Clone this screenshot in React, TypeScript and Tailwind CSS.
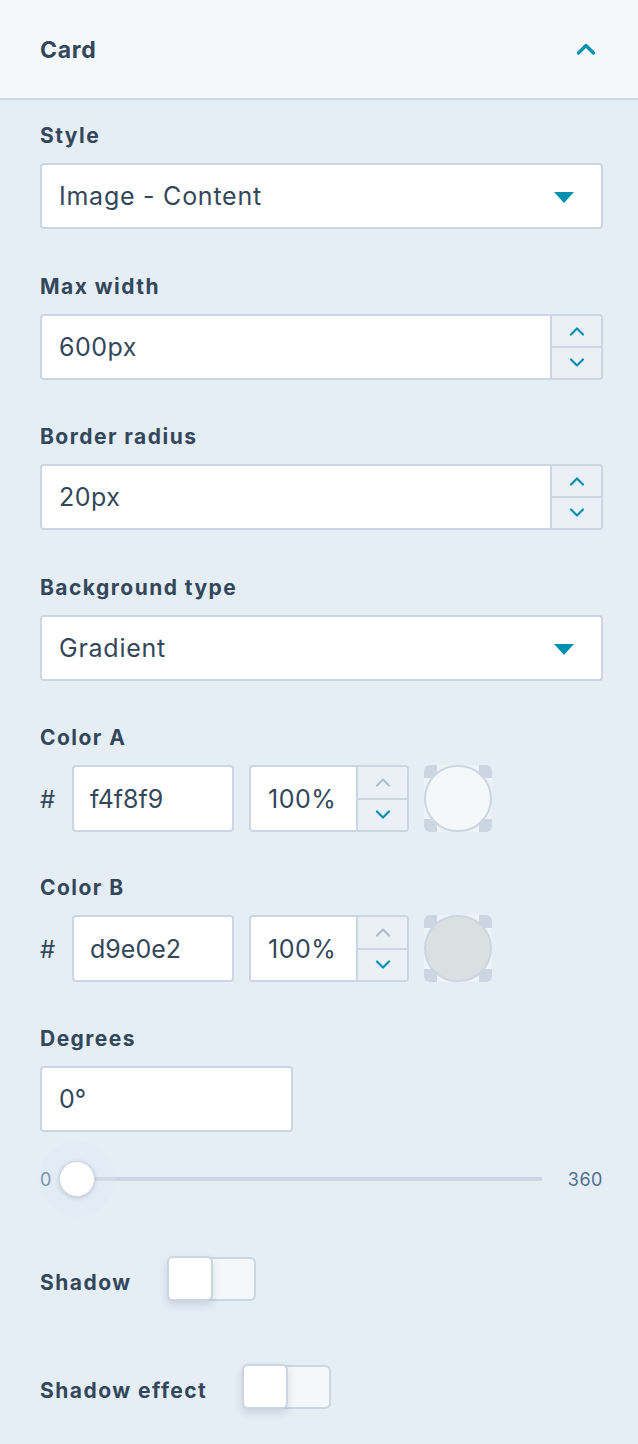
import React from 'react';

const font = { fontFamily: 'Inter, "Noto Sans", sans-serif' };

const ChevronUp = ({ className = '' }: { className?: string }) => (
  <svg width="16" height="10" viewBox="0 0 16 10" className={className} fill="none">
    <path d="M2 8.5 L8 2.5 L14 8.5" stroke="currentColor" strokeWidth="2.2" strokeLinecap="round" strokeLinejoin="round" />
  </svg>
);

const ChevronDown = ({ className = '' }: { className?: string }) => (
  <svg width="16" height="10" viewBox="0 0 16 10" className={className} fill="none">
    <path d="M2 1.5 L8 7.5 L14 1.5" stroke="currentColor" strokeWidth="2.2" strokeLinecap="round" strokeLinejoin="round" />
  </svg>
);

const Label = ({ children }: { children: React.ReactNode }) => (
  <div className="h-7 leading-7 text-[21px] tracking-[0.07em] font-bold text-[#33475b] mb-[13px]">{children}</div>
);

const Select = ({ value }: { value: string }) => (
  <div className="h-[66px] w-full bg-white border-2 border-[#cbd6e2] rounded-[4px] flex items-center justify-between pl-[17px] pr-[27px] pt-[2px]">
    <span className="text-[25px] tracking-[0.03em] text-[#33475b]">{value}</span>
    <svg width="20" height="11" viewBox="0 0 20 11">
      <path d="M0 0 H20 L10 11 Z" fill="#0091ae" />
    </svg>
  </div>
);

const Stepper = ({ upDisabled = false }: { upDisabled?: boolean }) => (
  <div className="w-[51px] h-full flex flex-col border-l-2 border-[#cbd6e2] bg-[#eaf0f6]">
    <div className="flex-1 flex items-center justify-center border-b-2 border-[#cbd6e2]">
      <ChevronUp className={upDisabled ? 'text-[#b0c1d4]' : 'text-[#0091ae]'} />
    </div>
    <div className="flex-1 flex items-center justify-center">
      <ChevronDown className="text-[#0091ae]" />
    </div>
  </div>
);

const NumberInput = ({ value, className = 'h-[66px]', upDisabled = false }: { value: string; className?: string; upDisabled?: boolean }) => (
  <div className={`bg-white border-2 border-[#cbd6e2] rounded-[4px] flex overflow-hidden ${className}`}>
    <div className="flex-1 flex items-center pl-[17px] pt-[2px] text-[25px] tracking-[0.02em] text-[#33475b]">{value}</div>
    <Stepper upDisabled={upDisabled} />
  </div>
);

const Swatch = ({ color }: { color: string }) => (
  <div className="relative w-[68px] h-[67px] rounded-[6px] overflow-hidden bg-[#eef3f8]">
    <div className="absolute left-0 top-0 w-[13px] h-[13px] bg-[#cbd6e2]" />
    <div className="absolute right-0 top-0 w-[13px] h-[13px] bg-[#cbd6e2]" />
    <div className="absolute left-0 bottom-0 w-[13px] h-[13px] bg-[#cbd6e2]" />
    <div className="absolute right-0 bottom-0 w-[13px] h-[13px] bg-[#cbd6e2]" />
    <div className="absolute inset-0 rounded-full border-2 border-[#cbd6e2]" style={{ backgroundColor: color }} />
  </div>
);

const ColorRow = ({ hex, fill }: { hex: string; fill: string }) => (
  <div className="flex items-center h-[67px]">
    <span className="w-[32px] text-[24px] text-[#33475b] pt-[2px]">#</span>
    <div className="w-[162px] h-[67px] bg-white border-2 border-[#cbd6e2] rounded-[4px] flex items-center pl-[16px] pt-[2px] text-[25px] text-[#33475b]">
      {hex}
    </div>
    <NumberInput value="100%" className="w-[160px] h-[67px] ml-[15px]" upDisabled />
    <div className="ml-[15px]">
      <Swatch color={fill} />
    </div>
  </div>
);

const Toggle = () => (
  <div className="relative w-[89px] h-[45px]">
    <div className="absolute left-[2px] right-0 top-[1px] bottom-0 bg-[#f5f8fa] border-2 border-[#cbd6e2] rounded-[6px]" />
    <div className="absolute left-0 top-0 w-[46px] h-[45px] bg-white border-2 border-[#cbd6e2] rounded-[6px] shadow-[0_4px_8px_rgba(45,62,80,0.15)]" />
  </div>
);

export default function App() {
  return (
    <div className="w-[638px] h-[1444px] bg-[#e5edf5] overflow-hidden" style={font}>
      {/* Header */}
      <div className="h-[100px] bg-[#f5f8fa] border-b-2 border-[#cbd6e2] flex items-center justify-between pl-10 pr-[42px]">
        <span className="text-[23px] tracking-[0.03em] font-bold text-[#33475b] pt-[2px]">Card</span>
        <svg width="20" height="12" viewBox="0 0 20 12" fill="none">
          <path d="M2.5 10 L10 2.5 L17.5 10" stroke="#0091ae" strokeWidth="3.2" strokeLinecap="round" strokeLinejoin="round" />
        </svg>
      </div>

      <div className="pl-10 pr-[35px] pt-[22px]">
        <Label>Style</Label>
        <Select value="Image - Content" />

        <div className="mt-[44px]">
          <Label>Max width</Label>
          <NumberInput value="600px" />
        </div>

        <div className="mt-[43px]">
          <Label>Border radius</Label>
          <NumberInput value="20px" />
        </div>

        <div className="mt-[44px]">
          <Label>Background type</Label>
          <Select value="Gradient" />
        </div>

        <div className="mt-[43px]">
          <Label>Color A</Label>
          <ColorRow hex="f4f8f9" fill="#f4f8f9" />
        </div>

        <div className="mt-[42px]">
          <Label>Color B</Label>
          <ColorRow hex="d9e0e2" fill="#d9e0e2" />
        </div>

        <div className="mt-[43px]">
          <Label>Degrees</Label>
          <div className="w-[253px] h-[66px] bg-white border-2 border-[#cbd6e2] rounded-[4px] flex items-center pl-[17px] pt-[2px] text-[25px] text-[#33475b]">
            0°
          </div>
        </div>

        {/* Slider */}
        <div className="mt-[29px] h-9 flex items-center">
          <span className="w-[19px] text-[18px] text-[#516f90]">0</span>
          <div className="relative flex-1 h-9 flex items-center">
            <div className="absolute left-[18px] right-[26px] h-[4px] bg-[#cbd6e2]" />
            <div className="absolute left-[-20px] w-[76px] h-[76px] rounded-full bg-[#dfe8f1]/30" />
            <div className="relative w-9 h-9 rounded-full bg-white border border-[#cbd6e2] shadow-[0_1px_4px_rgba(45,62,80,0.2)]" />
          </div>
          <span className="text-[18px] tracking-[0.03em] text-[#516f90]">360</span>
        </div>

        {/* Shadow */}
        <div className="mt-[59px] flex items-center gap-[35px]">
          <span className="text-[21px] tracking-[0.07em] font-bold text-[#33475b] pt-[8px]">Shadow</span>
          <Toggle />
        </div>

        <div className="mt-[63px] flex items-center gap-[35px]">
          <span className="text-[21px] tracking-[0.07em] font-bold text-[#33475b] pt-[8px]">Shadow effect</span>
          <Toggle />
        </div>
      </div>
    </div>
  );
}
